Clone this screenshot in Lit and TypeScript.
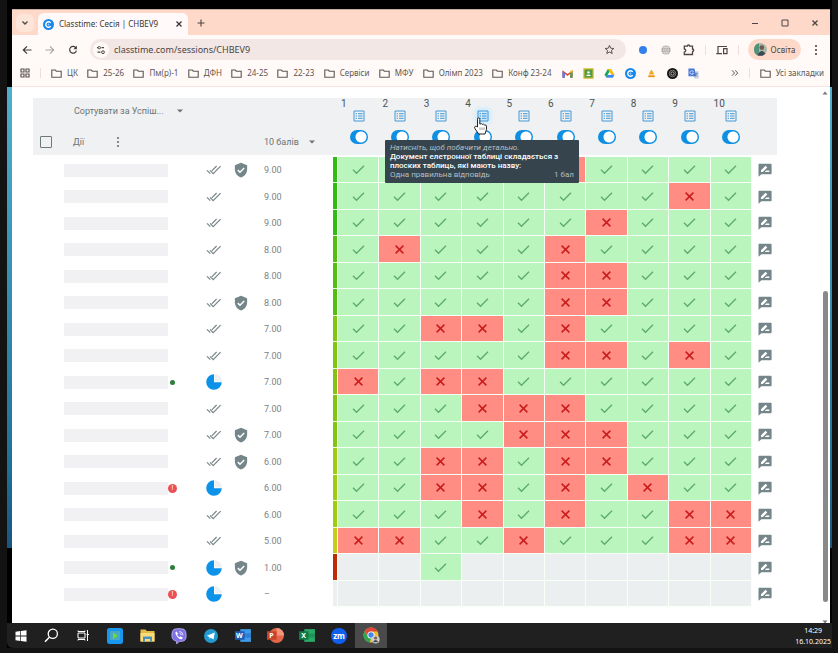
import { LitElement, html, css, svg, nothing } from "lit";
import { customElement } from "lit/decorators.js";
import { classMap } from "lit/directives/class-map.js";

const box = (size: number, view: string, body: unknown, cls = "") =>
  html`<svg class=${cls} width=${size} height=${size} viewBox=${view} aria-hidden="true">${body}</svg>`;

const line = (d: string, width = 1.2, color = "currentColor") =>
  svg`<path d=${d} fill="none" stroke=${color} stroke-width=${width} />`;
const fill = (d: string, color = "currentColor") => svg`<path d=${d} fill=${color} />`;

const icons = {
  chevron: box(8, "0 0 8 8", line("M1.5 2.5 4 5 6.5 2.5", 1.3)),
  close: box(8, "0 0 8 8", line("M1.5 1.5 6.5 6.5M6.5 1.5 1.5 6.5", 1.3)),
  plus: box(8, "0 0 8 8", line("M4 .5V7.5M.5 4H7.5", 1.1)),
  minimize: box(8, "0 0 8 8", line("M1 4.5H7", 1)),
  maximize: box(8, "0 0 8 8", line("M1 1H7V7H1Z", 1)),
  back: box(10, "0 0 10 10", line("M9.5 5H1.5M5 1.3 1.3 5 5 8.7", 1.2)),
  forward: box(10, "0 0 10 10", line("M.5 5H8.5M5 1.3 8.7 5 5 8.7", 1.1)),
  reload: box(10, "0 0 10 10", svg`${line("M8 3A3.4 3.4 0 1 0 8.4 5.6", 1.2)}${fill("M8.9.8V4.2H5.5Z")}`),
  tune: box(10, "0 0 10 10", svg`${line("M1 2.7H2M5.5 2.7H8M1.5 7.2H4.5", 1.2)}<circle cx="3.3" cy="2.7" r="1.2" fill="none" stroke="currentColor"/><circle cx="7" cy="7.2" r="1.4" fill="none" stroke="currentColor"/>`),
  star: box(11, "0 0 24 24", line("M12 3 14.6 9.2 21.4 9.8 16.3 14.2 17.8 20.8 12 17.3 6.2 20.8 7.7 14.2 2.6 9.8 9.4 9.2Z", 2)),
  dot: box(10, "0 0 10 10", svg`<circle cx="5" cy="5" r="4" fill="#3480ea"/>`),
  globe: box(10, "0 0 10 10", svg`<circle cx="5" cy="5" r="4.6" fill="#a39d9c"/>${line("M.5 5H9.5M5 .5V9.5M1.4 2.6H8.6M1.4 7.4H8.6", 0.6, "#f4efed")}<ellipse cx="5" cy="5" rx="2.2" ry="4.4" fill="none" stroke="#f4efed" stroke-width=".6"/>`),
  puzzle: box(12, "0 0 12 12", line("M1.3 2.2H4.3A1.2 1.2 0 0 1 6.7 2.2H9.5V5A1.2 1.2 0 0 1 9.5 7.4V10.5H1.3V8A1.5 1.5 0 0 0 1.3 5Z", 1.3)),
  devices: box(12, "0 0 12 12", line("M2 9V2.5H11M.3 9.6H6M7.6 4.6H11V9.6H7.6Z", 1.2)),
  more: box(12, "0 0 12 12", svg`<circle cx="6" cy="2" r="1.1" fill="currentColor"/><circle cx="6" cy="6" r="1.1" fill="currentColor"/><circle cx="6" cy="10" r="1.1" fill="currentColor"/>`),
  apps: box(10, "0 0 10 10", line("M1 1H4V4H1ZM6 1H9V4H6ZM1 6H4V9H1ZM6 6H9V9H6Z", 1.2)),
  folder: box(11, "0 0 11 11", line("M.8 2H4.2L5.4 3.2H10.2V9.2H.8Z", 1.1)),
  double: box(8, "0 0 8 8", line("M1 1.3 3.5 4 1 6.7M4.2 1.3 6.7 4 4.2 6.7", 1)),
  caret: box(8, "0 0 8 8", fill("M1 2.5H7L4 5.5Z"), "caret"),
  list: box(12, "0 0 12 12", svg`${line("M1 1H11V11H1Z", 1)}${line("M2.6 3.7H4M2.6 6H4M2.6 8.3H4M5 3.7H9.6M5 6H9.6M5 8.3H9.6", 1)}`),
  doubleCheck: box(16, "0 0 16 16", line("M1 8.3 4.3 11.6M4 8.3 7.2 11.6 14.6 4.2M5.8 8.8 10.6 4", 1.2)),
  shield: box(16, "0 0 24 24", svg`${fill("M12 1 2.8 4.8V11C2.8 17 6.7 21.7 12 23.2 17.3 21.7 21.2 17 21.2 11V4.8Z")}${line("M7.2 12.2 10.5 15.4 16.8 9", 2.2, "#fff")}`),
  pie: box(16, "0 0 16 16", svg`<path d="M8.6 0A8 8 0 0 1 16 7.4H8.6Z" fill="#ecf0f1"/><path d="M8 .2A7.8 7.8 0 1 0 15.8 8.3H8Z" fill="#0d92ea"/>`),
  check: box(13, "0 0 13 13", line("M1 6.8 4.5 10.3 12 2.7", 1.3)),
  cross: box(13, "0 0 13 13", line("M2.6 2.6 10.4 10.4M10.4 2.6 2.6 10.4", 1.5)),
  note: box(14, "0 0 14 14", svg`${fill("M1.2 .8H12.8Q13.6 .8 13.6 1.6V10.4Q13.6 11.2 12.8 11.2H3.4L.5 13.8V1.6Q.5 .8 1.2 .8Z")}${fill("M3 8.9V7.2L7.6 2.8 9.3 4.5 4.8 8.9ZM6.8 8.9 8.2 7.5H11.3V8.9Z", "#fff")}`),
  hand: box(18, "0 0 18 18", svg`<path d="M5.5 10V2.2Q5.5 .8 6.6 .8T7.8 2.2V7Q9.6 6 10.3 7.4 11.8 6.7 12.5 8 14.3 7.6 14.5 9.2V12.3L13 17H6.7L3 11.7Q2 9.8 3.3 9.3 4.5 9.1 5.5 10Z" fill="#fff" stroke="#222" stroke-width="1"/><path d="M8 13V10.5M10 13V10.5M12 13V10.5" stroke="#555" stroke-width=".6"/>`),
};

const classLogo = (size: number) =>
  box(size, "0 0 12 12", svg`<circle cx="6" cy="6" r="6" fill="#1787ee"/>${line("M8.4 4.2A3 3 0 1 0 8.4 7.8", 1.5, "#fff")}<circle cx="6" cy="6" r="1" fill="#8fd0ff"/>`);

const shortcuts = [
  { name: "Gmail", icon: box(11, "0 0 12 12", svg`${fill("M.5 10.5V2.5L6 6.6 11.5 2.5V10.5H9V6.2L6 8.6 3 6.2V10.5Z", "#e04335")}${fill("M.5 3.6 3 5.5V10.5H.5Z", "#4285f4")}${fill("M11.5 3.6 9 5.5V10.5H11.5Z", "#34a853")}${fill("M9 3.6 11.5 2V4L9 5.9Z", "#f5b912")}`) },
  { name: "Classroom", icon: box(11, "0 0 12 12", svg`<path d="M1 1H11V11H1Z" fill="#4f9d48" stroke="#d9bd2e" stroke-width="1.3"/><circle cx="6" cy="4.8" r="1.3" fill="#fff"/>${fill("M3.2 8.6Q6 5.6 8.8 8.6Z", "#fff")}`) },
  { name: "Drive", icon: box(11, "0 0 12 12", svg`${fill("M4.2 1.2H7.8L6 4.3 2.6 10.4.5 7.4Z", "#1ea463")}${fill("M4.2 1.2H7.8L11.5 7.4H8Z", "#fbbc04")}${fill("M4 7.4H11.5L9.6 10.6H2.4Z", "#4285f4")}${fill("M6 4.4 7.8 7.4H4.2Z", "#fff")}`) },
  { name: "Classtime", icon: classLogo(11) },
  { name: "Firebase", icon: box(11, "0 0 12 12", svg`${fill("M6 1.5 8 5 9 7H3L4 5Z", "#f6a623")}${fill("M2.5 8H9.5V10H2.5Z", "#e99312")}`) },
  { name: "Podcast", icon: box(11, "0 0 12 12", svg`<circle cx="6" cy="6" r="6" fill="#151515"/><circle cx="6" cy="6" r="3.6" fill="none" stroke="#aaa" stroke-width=".7"/><circle cx="6" cy="6" r="1.8" fill="none" stroke="#ddd" stroke-width=".8"/>`) },
  { name: "Translate", icon: box(11, "0 0 12 12", svg`${fill("M4 3.5H11.5V11.5H7Z", "#c4cfdf")}${fill("M.5 .5H7L9 9H.5Z", "#4778d9")}${line("M6 4.3A2 2 0 1 0 6 5.6H4.6", 0.8, "#fff")}${line("M8 6H11M9.5 5V6Q9 8 8 9M8.8 7 10.6 9", 0.6, "#5a79ad")}`) },
];

const folders = ["ЦК", "25-26", "Пм(р)-1", "ДФН", "24-25", "22-23", "Сервіси", "МФУ", "Олімп 2023", "Конф 23-24"];

const office = (letter: string, dark: string, light: string) => html`<span class="office">
  ${box(17, "0 0 16 16", svg`<path d="M5 2H15V14H5Z" fill=${light}/><path d="M5 6H15V10H5Z" fill=${dark} opacity=".45"/><path d="M0 4H9V12H0Z" fill=${dark}/>`)}<b>${letter}</b></span>`;

const apps = [
  { name: "Пуск", icon: box(12, "0 0 12 12", fill("M.5 1.8 5.3 1.1V5.6H.5ZM6 1 11.5.3V5.6H6ZM.5 6.4H5.3V10.9L.5 10.2ZM6 6.4H11.5V11.7L6 11Z")) },
  { name: "Пошук", icon: box(15, "0 0 15 15", svg`<circle cx="8.8" cy="5.8" r="4.6" fill="none" stroke="currentColor" stroke-width="1.3"/>${line("M5.4 9.2 1 13.8", 1.5)}`) },
  { name: "Подання завдань", icon: box(13, "0 0 13 13", line("M1 4H8V9H1ZM1 1.5V2.5H8V1.5M1 11.5V10.5H8V11.5M10.5 1V12M9.5 5.5H12", 1)) },
  { name: "Плеєр", icon: box(16, "0 0 16 16", svg`<rect width="16" height="16" rx="2.5" fill="#1797ee"/><rect x="3" y="3" width="10" height="9" rx="1" fill="#4aa7c5"/>${fill("M6 4.6 11 7.8 6 11Z", "#65df34")}`) },
  { name: "Провідник", icon: box(15, "0 0 15 15", svg`${fill("M.5 1.5H5.5L6.8 3H14.5V13.5H.5Z", "#e6b944")}${fill("M.5 5H14.5V13.5H.5Z", "#fbdc79")}${fill("M3 8.5H12V13.5H10V11H5V13.5H3Z", "#4b91be")}`) },
  { name: "Viber", icon: box(16, "0 0 16 16", svg`<path d="M3 1.2Q8 0 13 1.2 15.2 2.5 15.2 7.4T12.5 13L8.2 13.6 5.6 16V13.2Q.8 12.4.8 7.5T3 1.2Z" fill="#8071e4" stroke="#cbc5ff" stroke-width=".7"/>${fill("M4.4 4.2 5.6 3.5 7 5.7 6.2 6.8Q6.8 8.5 8.5 9.2L9.6 8.3 11.8 9.8 11 11.2Q9 12 6.3 9 4 6.3 4.4 4.2Z", "#fff")}${line("M8.3 3.4Q11.8 3.7 12 7.3M8.5 5.2Q10 5.4 10.3 7", 0.8, "#fff")}`) },
  { name: "Telegram", icon: box(14, "0 0 14 14", svg`<circle cx="7" cy="7" r="7" fill="#239bd0"/>${fill("M2.8 6.8 10.8 3.5 9.5 10.5 6.7 8.7 5.5 9.9 5.3 8Z", "#fff")}`) },
  { name: "Word", icon: office("W", "#1b5cbd", "#3f9be5") },
  { name: "PowerPoint", icon: html`<span class="office">${box(17, "0 0 16 16", svg`<circle cx="9" cy="8" r="7" fill="#e5674a"/>${fill("M9 1A7 7 0 0 1 16 8H9Z", "#f7957a")}${fill("M0 4H9V12H0Z", "#c9432a")}`)}<b>P</b></span>` },
  { name: "Excel", icon: office("X", "#127a43", "#2aaa69") },
  { name: "Zoom", icon: html`<span class="zoom-logo">zm</span>` },
  { name: "Chrome", active: true, icon: box(17, "0 0 17 17", svg`<circle cx="8" cy="8" r="7.5" fill="#efbd2e"/>${fill("M8 .5A7.5 7.5 0 0 1 14.6 4.4H8L4.8 9.5 1.5 4.3A7.5 7.5 0 0 1 8 .5Z", "#dd473c")}${fill("M1.5 4.3 5 10 8 11.5 6.5 15.4A7.5 7.5 0 0 1 1.5 4.3Z", "#2ea553")}<circle cx="8" cy="8" r="3.6" fill="#fff"/><circle cx="8" cy="8" r="2.7" fill="#4286ee"/><circle cx="12.6" cy="12.4" r="4" fill="#d1cec9"/><circle cx="12.6" cy="11" r="1.6" fill="#76635b"/><path d="M9.8 15.2Q12.6 10.8 15.4 15.2Z" fill="#454b52"/>`) },
];

type Row = { score: string; tone: string; wrong: number[]; open?: boolean; guarded?: boolean; mark?: "online" | "alert"; only?: number[] };

const rows: Row[] = [
  { score: "9.00", tone: "t9", wrong: [6], guarded: true },
  { score: "9.00", tone: "t9", wrong: [9] },
  { score: "9.00", tone: "t9", wrong: [7] },
  { score: "8.00", tone: "t8", wrong: [2, 6] },
  { score: "8.00", tone: "t8", wrong: [6, 7] },
  { score: "8.00", tone: "t8", wrong: [6, 7], guarded: true },
  { score: "7.00", tone: "t7", wrong: [3, 4, 6] },
  { score: "7.00", tone: "t7", wrong: [6, 7, 9] },
  { score: "7.00", tone: "t7", wrong: [1, 3, 4], open: true, mark: "online" },
  { score: "7.00", tone: "t7", wrong: [4, 5, 6] },
  { score: "7.00", tone: "t7", wrong: [5, 6, 7], guarded: true },
  { score: "6.00", tone: "t6", wrong: [3, 4, 6, 7], guarded: true },
  { score: "6.00", tone: "t6", wrong: [3, 4, 6, 8], open: true, mark: "alert" },
  { score: "6.00", tone: "t6", wrong: [4, 6, 9, 10] },
  { score: "5.00", tone: "t5", wrong: [1, 2, 5, 9, 10] },
  { score: "1.00", tone: "t1", wrong: [], only: [3], open: true, guarded: true, mark: "online" },
  { score: "–", tone: "t0", wrong: [], only: [], open: true, mark: "alert" },
];

const questions = Array.from({ length: 10 }, (_, i) => i + 1);

const reset = css`
  * { box-sizing: border-box; }
  svg { display: block; flex: none; }
  button { border: 0; padding: 0; margin: 0; background: none; color: inherit; font: inherit; display: flex; align-items: center; justify-content: center; flex: none; }
  a { color: inherit; text-decoration: none; }
`;

@customElement("browser-chrome")
export class BrowserChrome extends LitElement {
  static styles = [reset, css`
    :host { display: block; font-family: "Noto Sans", sans-serif; font-size: 9px; line-height: 12px; color: #4c4542; }
    .tabs { display: flex; align-items: center; height: 26px; padding: 0 4px; background: #fed9c9; border-top: 1px solid #c9aca0; }
    .tab-menu { width: 18px; height: 18px; border-radius: 6px; background: #fde5da; }
    .tab { display: flex; align-items: center; gap: 5px; align-self: flex-end; width: 150px; height: 22px; margin-left: 4px; padding: 0 5px; border-radius: 6px 6px 0 0; background: #fffaf9; font-size: 8px; color: #3b3432; white-space: nowrap; }
    .tab span { flex: 1; }
    .new { width: 16px; height: 16px; margin-left: 5px; }
    .controls { display: flex; gap: 18px; margin-left: auto; padding-right: 5px; }
    .controls button { width: 12px; height: 16px; }
    .bar { display: flex; align-items: center; height: 27px; padding: 2px 8px 0 8px; background: #fffaf8; }
    .nav { display: flex; gap: 9px; color: #403a38; }
    .nav button { width: 14px; height: 16px; }
    .nav .off { color: #aaa3a0; }
    .address { display: flex; align-items: center; flex: 1; height: 21px; margin: 0 10px; padding: 0 11px 0 3px; border-radius: 11px; background: #f2e7e5; }
    .site { width: 16px; height: 16px; border-radius: 8px; background: #fffaf8; }
    .address input { flex: 1; min-width: 0; border: 0; padding: 0 0 0 5px; background: none; font: inherit; color: #4c4542; outline: none; }
    .tools { display: flex; align-items: center; gap: 9px; }
    .tools .narrow { width: 14px; height: 18px; }
    .rule { width: 1px; height: 10px; background: #eeded8; }
    .profile { gap: 4px; height: 21px; width: 53px; border-radius: 11px; background: #fed9c9; font-size: 8px; }
    .bookmarks { display: flex; align-items: center; height: 25px; padding: 0 6px 2px 8px; background: #fffaf8; border-bottom: 1px solid #f8e5df; font-size: 8px; white-space: nowrap; color: #5c5552; }
    .bookmarks .rule { margin: 0 10px; }
    .folders { display: flex; flex: 1; justify-content: space-between; }
    .folder { display: flex; align-items: center; gap: 5px; }
    .folder svg { color: #5c5752; }
    .sites { display: flex; gap: 10px; margin: 0 32px 0 10px; }
  `];

  render() {
    return html`
      <div class="tabs">
        <button class="tab-menu" aria-label="Пошук вкладок">${icons.chevron}</button>
        <div class="tab">${classLogo(11)}<span>Classtime: Сесія | CHBEV9</span><button aria-label="Закрити вкладку">${icons.close}</button></div>
        <button class="new" aria-label="Нова вкладка">${icons.plus}</button>
        <div class="controls">
          <button aria-label="Згорнути">${icons.minimize}</button>
          <button aria-label="Розгорнути">${icons.maximize}</button>
          <button aria-label="Закрити">${icons.close}</button>
        </div>
      </div>
      <div class="bar">
        <div class="nav">
          <button aria-label="Назад">${icons.back}</button>
          <button class="off" aria-label="Вперед">${icons.forward}</button>
          <button aria-label="Оновити">${icons.reload}</button>
        </div>
        <div class="address">
          <button class="site" aria-label="Дані сайту">${icons.tune}</button>
          <input aria-label="Адреса" .value=${"classtime.com/sessions/CHBEV9"} />
          <button aria-label="Додати закладку">${icons.star}</button>
        </div>
        <div class="tools">
          <button class="narrow" aria-label="Розширення 1">${icons.dot}</button>
          <button class="narrow" aria-label="Розширення 2">${icons.globe}</button>
          <button class="narrow" aria-label="Розширення">${icons.puzzle}</button>
          <span class="rule"></span>
          <button class="narrow" aria-label="Пристрої">${icons.devices}</button>
          <span class="rule"></span>
          <button class="profile">${box(13, "0 0 13 13", svg`<circle cx="6.5" cy="6.5" r="6.5" fill="#a9b7a9"/><path d="M0 6.5A6.5 6.5 0 0 1 5 .2L5 12.8A6.5 6.5 0 0 1 0 6.5Z" fill="#4f9179"/><circle cx="7.8" cy="4.6" r="2.3" fill="#6d5951"/><path d="M3.5 12.2Q7.5 4.8 11.4 10.8 8 14 3.5 12.2Z" fill="#414750"/>`)}Освіта</button>
          <button aria-label="Меню">${icons.more}</button>
        </div>
      </div>
      <nav class="bookmarks">
        <button aria-label="Додатки">${icons.apps}</button>
        <span class="rule"></span>
        <div class="folders">${folders.map((f) => html`<button class="folder">${icons.folder}${f}</button>`)}</div>
        <div class="sites">${shortcuts.map((s) => html`<a href="#" aria-label=${s.name}>${s.icon}</a>`)}</div>
        <button aria-label="Більше закладок">${icons.double}</button>
        <span class="rule"></span>
        <button class="folder">${icons.folder}Усі закладки</button>
      </nav>`;
  }
}

@customElement("session-results")
export class SessionResults extends LitElement {
  static styles = [reset, css`
    :host { display: block; font-family: Roboto, sans-serif; font-size: 9px; line-height: 12px; color: #6d7476; }
    table { width: 100%; table-layout: fixed; border-collapse: separate; border-spacing: 0; }
    th, td { padding: 0; font-weight: 400; text-align: left; }
    .c-name { width: 162px; }
    .c-status { width: 38px; }
    .c-shield { width: 31px; }
    .c-score { width: 69px; }
    .c-tone { width: 5px; }
    .c-note { width: 25px; }
    th { height: 59px; vertical-align: top; background: #eff1f2; border-bottom: 2px solid #fff; }
    .top, .bottom { display: flex; align-items: center; }
    .top { height: 26px; padding-left: 41px; }
    .bottom { height: 31px; padding-top: 5px; }
    .all { appearance: none; width: 12px; height: 12px; margin: 0 21px 0 7px; border: 1px solid #6f787b; border-radius: 1px; }
    .actions { margin-left: 28px; }
    .pick { position: relative; display: flex; align-items: center; }
    .pick select { appearance: none; border: 0; padding: 0 18px 0 0; margin: 0; background: none; color: inherit; font: inherit; }
    .pick.wide select { width: 110px; }
    .pick.slim select { width: 52px; padding: 0; }
    .pick .caret { position: absolute; right: 0; pointer-events: none; }
    .score-head { padding-top: 26px; }
    .question { position: relative; display: flex; flex-direction: column; align-items: center; }
    .num { align-self: flex-start; padding-left: 3px; font-size: 10px; color: #4c5356; }
    .question button { color: #4498d5; }
    .question .hot { border-radius: 3px; background: #c9e8fd; box-shadow: 0 0 3px 3px #d8eefc; }
    .switch { appearance: none; width: 18px; height: 14px; margin: 8px 0 0; border-radius: 7px; background: radial-gradient(circle at 11px 7px, #fff 5px, #0e8fe2 6px); }
    .cursor { position: absolute; z-index: 3; top: 19px; left: 10px; }
    .tip { position: absolute; z-index: 2; top: 42px; left: 50%; width: 194px; margin-left: -98px; padding: 3px 5px 4px; border-radius: 1px; background: #36454d; color: #fff; font-size: 8px; line-height: 9px; }
    .tip p { margin: 0; }
    .tip i, .tip .foot { color: #b3bec3; }
    .tip b { font-weight: 500; }
    .foot { display: flex; justify-content: space-between; }

    tbody tr { height: 26px; }
    tbody tr:nth-child(even) { height: 27px; }
    td { height: inherit; vertical-align: middle; color: #7b8285; }
    td svg { margin: 0 auto; }
    .name { display: flex; align-items: center; gap: 2px; padding-left: 31px; }
    .blank { width: 104px; height: 13px; background: #f1f1f3; }
    .online { width: 5px; height: 5px; border-radius: 50%; background: #2e7d3b; }
    .alert { width: 9px; height: 9px; margin-left: -2px; border-radius: 50%; background: #ec5057; color: #fff; font-size: 7px; line-height: 9px; text-align: center; }
    .status { color: #7a8588; }
    .guard, .note { color: #75868b; }
    .guard svg { margin: 0; }
    .note { margin-left: 6px; }
    .tone, .answer { border-right: 1px solid #f7fff7; border-bottom: 1px solid #f7fff7; }
    .ok { background: #b9f5bc; color: #5dac68; }
    .bad { background: #ff8d84; color: #c91d1d; }
    .none { background: #ebeff0; }
    .t9 { background: #30bd13; }
    .t8 { background: #52bf10; }
    .t7 { background: #83c411; }
    .t6 { background: #a2ca12; }
    .t5 { background: #c5cc19; }
    .t1 { background: #bd2c09; }
    .t0 { background: #ebeff0; }
  `];

  private head(n: number) {
    return html`<th scope="col"><div class="question">
      <span class="num">${n}</span>
      <button class=${classMap({ hot: n === 4 })} aria-label="Питання ${n}">${icons.list}</button>
      <input class="switch" type="checkbox" checked aria-label="Показувати питання ${n}" />
      ${n === 4
        ? html`<div class="tip" role="tooltip">
              <p><i>Натисніть, щоб побачити детально.</i></p>
              <p><b>Документ елетронної таблиці складається з плоских таблиць, які мають назву:</b></p>
              <p class="foot"><span>Одна правильна відповідь</span><span>1 бал</span></p>
            </div><span class="cursor">${icons.hand}</span>`
        : nothing}
    </div></th>`;
  }

  private cell(row: Row, n: number) {
    if (row.only && !row.only.includes(n)) return html`<td class="answer none"></td>`;
    const bad = row.wrong.includes(n);
    return html`<td class="answer ${bad ? "bad" : "ok"}">${bad ? icons.cross : icons.check}</td>`;
  }

  render() {
    return html`<table>
      <colgroup>
        <col class="c-name" /><col class="c-status" /><col class="c-shield" /><col class="c-score" /><col class="c-tone" />
        ${questions.map(() => html`<col />`)}<col class="c-note" />
      </colgroup>
      <thead><tr>
        <th colspan="3">
          <div class="top"><label class="pick wide"><select aria-label="Сортування"><option>Сортувати за Успіш...</option></select>${icons.caret}</label></div>
          <div class="bottom"><input class="all" type="checkbox" aria-label="Вибрати всіх" /><span>Дії</span><button class="actions" aria-label="Дії">${icons.more}</button></div>
        </th>
        <th colspan="2"><div class="score-head"><div class="bottom"><label class="pick slim"><select aria-label="Бали"><option>10 балів</option></select>${icons.caret}</label></div></div></th>
        ${questions.map((n) => this.head(n))}
        <th></th>
      </tr></thead>
      <tbody>${rows.map((row) => html`<tr>
        <td><div class="name"><span class="blank"></span>${row.mark === "online" ? html`<span class="online"></span>` : row.mark === "alert" ? html`<span class="alert">!</span>` : nothing}</div></td>
        <td class="status">${row.open ? icons.pie : icons.doubleCheck}</td>
        <td class="guard">${row.guarded ? icons.shield : nothing}</td>
        <td>${row.score}</td>
        <td class="tone ${row.tone}"></td>
        ${questions.map((n) => this.cell(row, n))}
        <td><button class="note" aria-label="Коментар">${icons.note}</button></td>
      </tr>`)}</tbody>
    </table>`;
  }
}

@customElement("task-bar")
export class TaskBar extends LitElement {
  static styles = [reset, css`
    :host { display: flex; align-items: center; justify-content: space-between; height: 25px; padding-right: 1px; background: #202021; color: #fff; border-radius: 0 0 0 6px; font-family: "Noto Sans", sans-serif; }
    .apps { display: flex; }
    .apps button { width: 32px; height: 25px; }
    .apps button:first-child { width: 28px; }
    .apps .active { background: #4a4a4b; }
    .office { position: relative; display: block; }
    .office b { position: absolute; left: 0; top: 4px; width: 10px; font-size: 7px; line-height: 9px; text-align: center; }
    .zoom-logo { width: 16px; height: 16px; border-radius: 8px; background: #1260ee; font-size: 8px; font-weight: 700; line-height: 15px; text-align: center; }
    .clock { display: flex; flex-direction: column; align-items: center; font-size: 7px; line-height: 11px; }
  `];

  render() {
    return html`<div class="apps">${apps.map((a) => html`<button class=${classMap({ active: !!a.active })} aria-label=${a.name}>${a.icon}</button>`)}</div>
      <div class="clock"><time>14:29</time><time>16.10.2025</time></div>`;
  }
}

@customElement("app-root")
export class AppRoot extends LitElement {
  static styles = [reset, css`
    :host { display: block; min-height: 100vh; padding: 0 6px 5px 7px; background: #131314; }
    .screen { display: flex; flex-direction: column; min-height: calc(100vh - 5px); background: #000; }
    .desktop { flex: 1; display: flex; padding: 9px 2px 0 5px; background: linear-gradient(#000 14%, #4fb0cb 14%, #1e7196 75%, #19557d 88%, #000 88%); }
    .window { flex: 1; min-width: 0; display: flex; flex-direction: column; background: #fff; }
    .page { flex: 1; display: flex; }
    main { flex: 1; min-width: 0; padding: 11px 43px 15px 21px; }
    .scroll { display: grid; grid-template-rows: 11px 36fr 58fr 3fr 5px; justify-items: center; width: 10px; color: #777; }
    .thumb { grid-row: 3; width: 5px; border-radius: 3px; background: #898989; }
    .up { align-self: center; }
    .down { grid-row: 5; }
  `];

  render() {
    return html`<div class="screen">
      <div class="desktop"><div class="window">
        <browser-chrome></browser-chrome>
        <div class="page">
          <main><session-results></session-results></main>
          <div class="scroll">${box(6, "0 0 6 6", fill("M.5 4.5 3 1.5 5.5 4.5Z"), "up")}<span class="thumb"></span>${box(6, "0 0 6 6", fill("M.5 2.5H5.5L3 5.5Z"), "down")}</div>
        </div>
      </div></div>
      <task-bar></task-bar>
    </div>`;
  }
}
